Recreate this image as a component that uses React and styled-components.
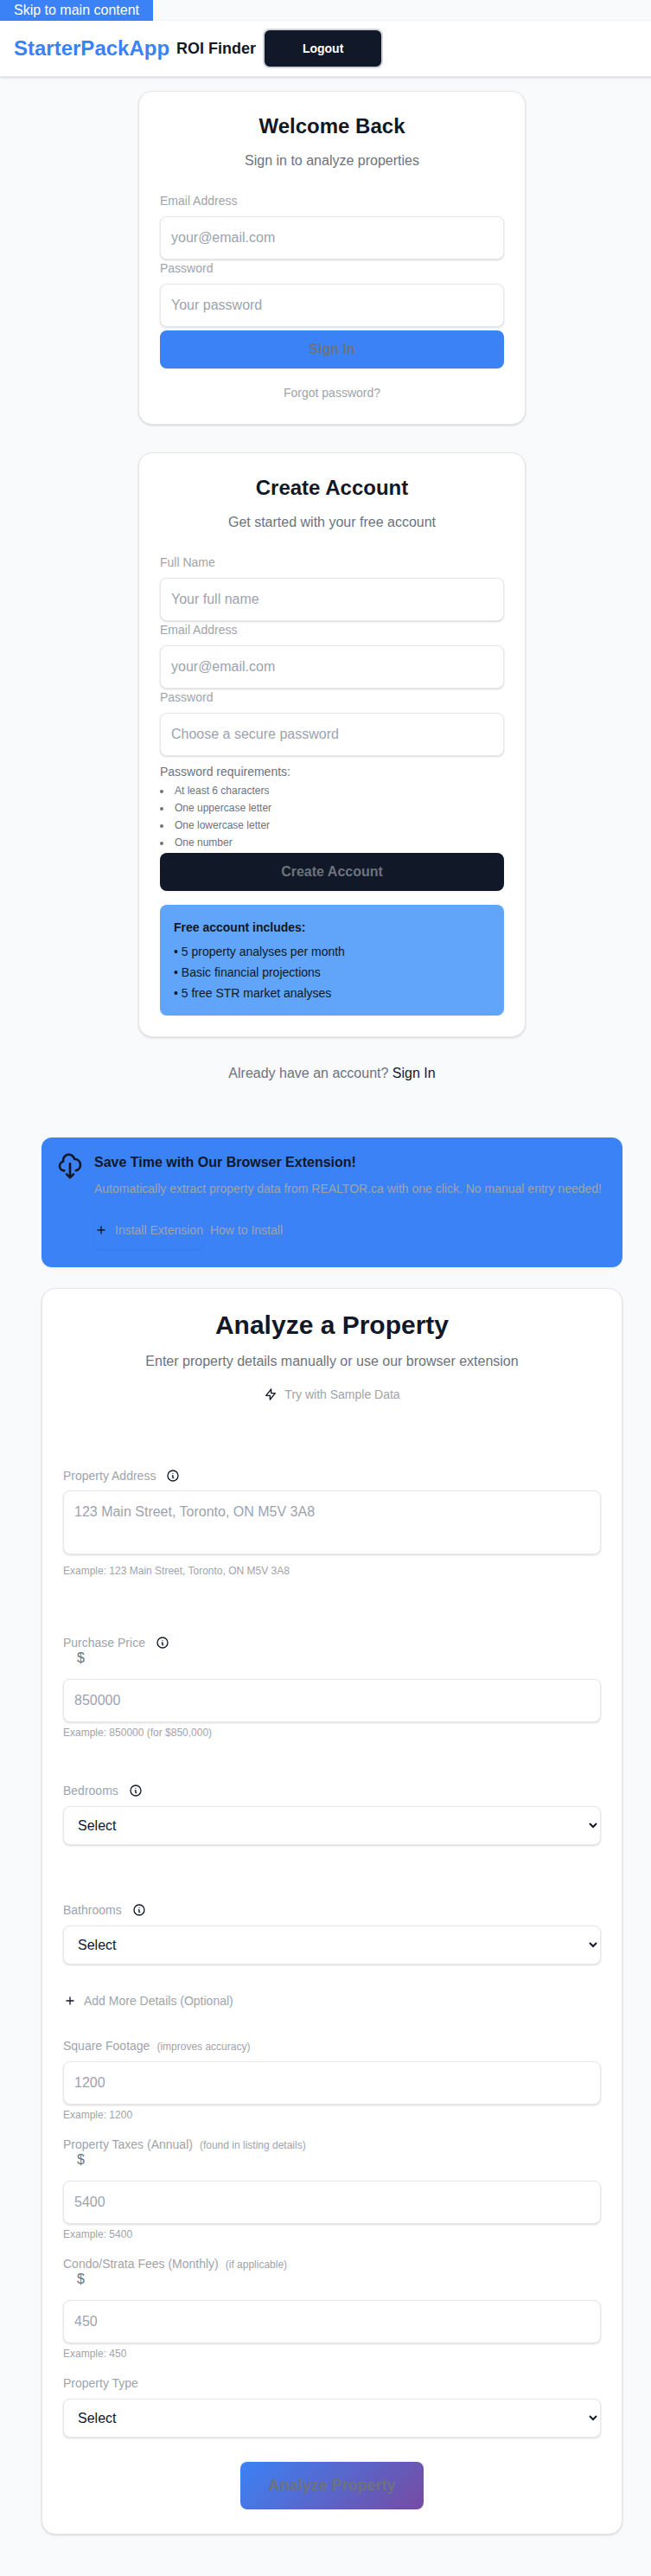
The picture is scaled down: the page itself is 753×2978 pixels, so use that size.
import React from "react";
import styled, { createGlobalStyle } from "styled-components";

const ink = "#111827";
const slate = "#6c737d";
const muted = "#a0a4aa";
const placeholder = "#9ca3af";
const line = "#e5e7eb";
const blue = "#3b82f6";
const softShadow = "0 1px 3px 0 rgba(0, 0, 0, 0.1), 0 1px 2px 0 rgba(0, 0, 0, 0.06)";
const thinShadow = "0 1px 2px 0 rgba(0, 0, 0, 0.05)";

const GlobalStyle = createGlobalStyle`
  *, *::before, *::after { box-sizing: border-box; }
  html, body { margin: 0; padding: 0; overflow-x: hidden; }
  body {
    background: #f9fafb;
    color: ${ink};
    font: 16px/24px "Liberation Sans", Arial, sans-serif;
  }
  h1, h2, h3, p, ul { margin: 0; padding: 0; }
  button, input, textarea, select { font: inherit; margin: 0; }
`;

const Page = styled.div`
  width: 768px;
  min-height: 2978px;
`;

const SkipLink = styled.a`
  display: block;
  width: fit-content;
  padding: 0 16px;
  background: ${blue};
  color: #fff;
  text-decoration: none;
`;

const Header = styled.header`
  display: flex;
  align-items: center;
  height: 65px;
  padding: 0 16px;
  background: #fff;
  border-bottom: 1px solid ${line};
  box-shadow: ${softShadow};
`;

const Brand = styled.span`
  font-size: 24px;
  line-height: 32px;
  font-weight: 700;
  color: ${blue};
`;

const Product = styled.span`
  margin-left: 8px;
  font-size: 18px;
  line-height: 28px;
  font-weight: 600;
`;

const LogoutButton = styled.button`
  width: 139px;
  height: 46px;
  margin-left: 8px;
  border: 2px solid #d1d5db;
  border-radius: 8px;
  background: ${ink};
  color: #fff;
  font-size: 14px;
  line-height: 20px;
  font-weight: 600;
`;

const AuthColumn = styled.main`
  display: flex;
  flex-direction: column;
  align-items: center;
  gap: 32px;
  padding-top: 16px;
`;

const Card = styled.section`
  width: ${(p) => p.$width}px;
  padding: 24px;
  background: #fff;
  border: 1px solid ${line};
  border-radius: 16px;
  box-shadow: ${softShadow};
`;

const CardTitle = styled.h2`
  font-size: ${(p) => (p.$large ? "30px" : "24px")};
  line-height: ${(p) => (p.$large ? "36px" : "32px")};
  font-weight: 700;
  text-align: center;
`;

const CardSubtitle = styled.p`
  margin-top: 12px;
  color: ${slate};
  text-align: center;
`;

const AuthForm = styled.form`
  display: flex;
  flex-direction: column;
  margin-top: 24px;
`;

const Field = styled.div`
  display: flex;
  flex-direction: column;
  margin-top: ${(p) => p.$top || 0}px;
`;

const LabelRow = styled.div`
  display: flex;
  align-items: center;
  height: 20px;
  margin-bottom: ${(p) => (p.$gap === undefined ? 8 : p.$gap)}px;
`;

const Label = styled.label`
  font-size: 14px;
  line-height: 20px;
  color: ${muted};
`;

const LabelNote = styled.span`
  margin-left: 8px;
  font-size: 12px;
  line-height: 16px;
  padding-top: 1px;
  color: ${muted};
`;

const Input = styled.input`
  width: 100%;
  height: 50px;
  padding: 12px;
  border: 1px solid ${line};
  border-radius: 8px;
  background: #fff;
  box-shadow: ${softShadow};
  &::placeholder { color: ${placeholder}; opacity: 1; }
`;

const TextArea = styled.textarea`
  width: 100%;
  height: 74px;
  padding: 12px;
  border: 1px solid ${line};
  border-radius: 8px;
  background: #fff;
  box-shadow: ${softShadow};
  resize: none;
  &::placeholder { color: ${placeholder}; opacity: 1; }
`;

const Select = styled.select`
  width: 100%;
  height: 45px;
  padding: 0 12px;
  border: 1px solid ${line};
  border-radius: 8px;
  background: #fff;
  color: ${ink};
  box-shadow: ${softShadow};
`;

const Currency = styled.span`
  height: 32px;
  margin-top: -8px;
  padding-left: 16px;
  line-height: 16px;
  color: ${slate};
`;

const Hint = styled.p`
  margin-top: ${(p) => p.$top || 4}px;
  font-size: 12px;
  line-height: 16px;
  color: ${muted};
`;

const SubmitButton = styled.button`
  height: 44px;
  margin-top: ${(p) => p.$top || 0}px;
  border: 0;
  border-radius: 8px;
  background: ${(p) => (p.$dark ? ink : blue)};
  box-shadow: ${thinShadow};
  color: ${slate};
  font-weight: 600;
`;

const ForgotLink = styled.a`
  margin-top: 16px;
  font-size: 14px;
  color: ${muted};
  text-align: center;
`;

const Requirements = styled.div`
  margin-top: 8px;
  color: ${slate};
  font-size: 14px;
  line-height: 20px;
`;

const RequirementList = styled.ul`
  margin-top: 4px;
  list-style: disc inside;
  font-size: 12px;
  line-height: 16px;
  li { margin-bottom: 4px; }
`;

const PlanBox = styled.div`
  display: flex;
  flex-direction: column;
  gap: 4px;
  margin-top: 16px;
  padding: 16px;
  border-radius: 8px;
  background: #60a5fa;
  box-shadow: ${thinShadow};
  font-size: 14px;
  line-height: 20px;
`;

const PlanTitle = styled.h3`
  margin-bottom: 4px;
  font-size: 14px;
  font-weight: 600;
`;

const SwitchLine = styled.p`
  margin-top: -2px;
  color: ${slate};
  a { color: ${ink}; }
`;

const Workspace = styled.div`
  display: flex;
  flex-direction: column;
  gap: 24px;
  width: 672px;
  margin: 62px auto 0;
`;

const Banner = styled.section`
  display: flex;
  gap: 12px;
  height: 150px;
  padding: 17px;
  border-radius: 12px;
  background: ${blue};
  box-shadow: ${thinShadow};
`;

const BannerTitle = styled.h3`
  font-size: 16px;
  font-weight: 600;
`;

const BannerText = styled.p`
  margin-top: 8px;
  font-size: 14px;
  line-height: 20px;
  color: ${muted};
  white-space: nowrap;
`;

const ButtonRow = styled.div`
  display: flex;
  gap: 8px;
  margin-top: 16px;
`;

const TextButton = styled.button`
  display: inline-flex;
  align-items: center;
  gap: 8px;
  height: 44px;
  padding: 0;
  border: 0;
  border-radius: 8px;
  background: none;
  box-shadow: ${(p) => (p.$raised ? thinShadow : "none")};
  color: ${muted};
  font-size: 14px;
  line-height: 20px;
`;

const Icon = styled.svg`
  flex: none;
  width: ${(p) => p.$size || 16}px;
  height: ${(p) => p.$size || 16}px;
  margin-left: ${(p) => p.$left || 0}px;
  fill: none;
  stroke: ${ink};
  stroke-width: 2;
  stroke-linecap: round;
  stroke-linejoin: round;
`;

const SampleRow = styled.div`
  display: flex;
  justify-content: center;
  margin-top: 4px;
`;

const PropertyForm = styled.form`
  display: flex;
  flex-direction: column;
`;

const MoreRow = styled.div`
  display: flex;
  margin-top: 20px;
`;

const AnalyzeButton = styled.button`
  align-self: center;
  height: 55px;
  margin: 28px 0 4px;
  padding: 0 32px;
  border: 0;
  border-radius: 8px;
  background: linear-gradient(135deg, ${blue} 0%, #764ba2 100%);
  color: ${slate};
  font-size: 18px;
  line-height: normal;
  font-weight: 600;
`;

const icons = {
  cloud: "M7 16a4 4 0 01-.88-7.903A5 5 0 1115.9 6L16 6a5 5 0 011 9.9M9 19l3 3m0 0l3-3m-3 3V10",
  plus: "M12 6v6m0 0v6m0-6h6m-6 0H6",
  bolt: "M13 10V3L4 14h7v7l9-11h-7z",
  info: "M13 16h-1v-4h-1m1-4h.01M21 12a9 9 0 11-18 0 9 9 0 0118 0z",
};

function Glyph({ name, size, left }) {
  return (
    <Icon viewBox="0 0 24 24" $size={size} $left={left} aria-hidden="true">
      <path d={icons[name]} />
    </Icon>
  );
}

function FieldLabel({ text, note, info, gap }) {
  return (
    <LabelRow $gap={gap}>
      <Label>{text}</Label>
      {note && <LabelNote>{note}</LabelNote>}
      {info && <Glyph name="info" left={12} />}
    </LabelRow>
  );
}

function TextField({ label, placeholder, type = "text" }) {
  return (
    <Field>
      <FieldLabel text={label} />
      <Input type={type} placeholder={placeholder} />
    </Field>
  );
}

function NumberField({ label, note, info, placeholder, hint, currency, top }) {
  return (
    <Field $top={top}>
      <FieldLabel text={label} note={note} info={info} />
      {currency && <Currency>$</Currency>}
      <Input placeholder={placeholder} />
      <Hint>{hint}</Hint>
    </Field>
  );
}

function SelectField({ label, info, top }) {
  return (
    <Field $top={top}>
      <FieldLabel text={label} info={info} />
      <Select>
        <option>Select</option>
      </Select>
    </Field>
  );
}

export default function App() {
  return (
    <>
      <GlobalStyle />
      <Page>
        <SkipLink>Skip to main content</SkipLink>
        <Header>
          <Brand>StarterPackApp</Brand>
          <Product>ROI Finder</Product>
          <LogoutButton>Logout</LogoutButton>
        </Header>

        <AuthColumn>
          <Card $width={448}>
            <CardTitle>Welcome Back</CardTitle>
            <CardSubtitle>Sign in to analyze properties</CardSubtitle>
            <AuthForm>
              <TextField label="Email Address" placeholder="your@email.com" />
              <TextField label="Password" type="password" placeholder="Your password" />
              <SubmitButton type="button" $top={4}>Sign In</SubmitButton>
              <ForgotLink>Forgot password?</ForgotLink>
            </AuthForm>
          </Card>

          <Card $width={448}>
            <CardTitle>Create Account</CardTitle>
            <CardSubtitle>Get started with your free account</CardSubtitle>
            <AuthForm>
              <TextField label="Full Name" placeholder="Your full name" />
              <TextField label="Email Address" placeholder="your@email.com" />
              <TextField label="Password" type="password" placeholder="Choose a secure password" />
              <Requirements>
                Password requirements:
                <RequirementList>
                  <li>At least 6 characters</li>
                  <li>One uppercase letter</li>
                  <li>One lowercase letter</li>
                  <li>One number</li>
                </RequirementList>
              </Requirements>
              <SubmitButton type="button" $dark>Create Account</SubmitButton>
            </AuthForm>
            <PlanBox>
              <PlanTitle>Free account includes:</PlanTitle>
              <p>• 5 property analyses per month</p>
              <p>• Basic financial projections</p>
              <p>• 5 free STR market analyses</p>
            </PlanBox>
          </Card>

          <SwitchLine>
            Already have an account? <a>Sign In</a>
          </SwitchLine>
        </AuthColumn>

        <Workspace>
          <Banner>
            <Glyph name="cloud" size={32} />
            <div>
              <BannerTitle>Save Time with Our Browser Extension!</BannerTitle>
              <BannerText>
                Automatically extract property data from REALTOR.ca with one click. No manual entry needed!
              </BannerText>
              <ButtonRow>
                <TextButton $raised>
                  <Glyph name="plus" />
                  Install Extension
                </TextButton>
                <TextButton>How to Install</TextButton>
              </ButtonRow>
            </div>
          </Banner>

          <Card $width={672}>
            <CardTitle $large>Analyze a Property</CardTitle>
            <CardSubtitle>Enter property details manually or use our browser extension</CardSubtitle>
            <SampleRow>
              <TextButton>
                <Glyph name="bolt" />
                Try with Sample Data
              </TextButton>
            </SampleRow>

            <PropertyForm>
              <Field $top={62}>
                <FieldLabel text="Property Address" info gap={7} />
                <TextArea placeholder="123 Main Street, Toronto, ON M5V 3A8" />
                <Hint $top={11}>Example: 123 Main Street, Toronto, ON M5V 3A8</Hint>
              </Field>
              <NumberField
                top={65}
                label="Purchase Price"
                info
                currency
                placeholder="850000"
                hint="Example: 850000 (for $850,000)"
              />
              <SelectField top={49} label="Bedrooms" info />
              <SelectField top={65} label="Bathrooms" info />
              <MoreRow>
                <TextButton type="button">
                  <Glyph name="plus" />
                  Add More Details (Optional)
                </TextButton>
              </MoreRow>
              <NumberField
                top={20}
                label="Square Footage"
                note="(improves accuracy)"
                placeholder="1200"
                hint="Example: 1200"
              />
              <NumberField
                top={16}
                label="Property Taxes (Annual)"
                note="(found in listing details)"
                currency
                placeholder="5400"
                hint="Example: 5400"
              />
              <NumberField
                top={16}
                label="Condo/Strata Fees (Monthly)"
                note="(if applicable)"
                currency
                placeholder="450"
                hint="Example: 450"
              />
              <SelectField top={16} label="Property Type" />
              <AnalyzeButton type="button">Analyze Property</AnalyzeButton>
            </PropertyForm>
          </Card>
        </Workspace>
      </Page>
    </>
  );
}
